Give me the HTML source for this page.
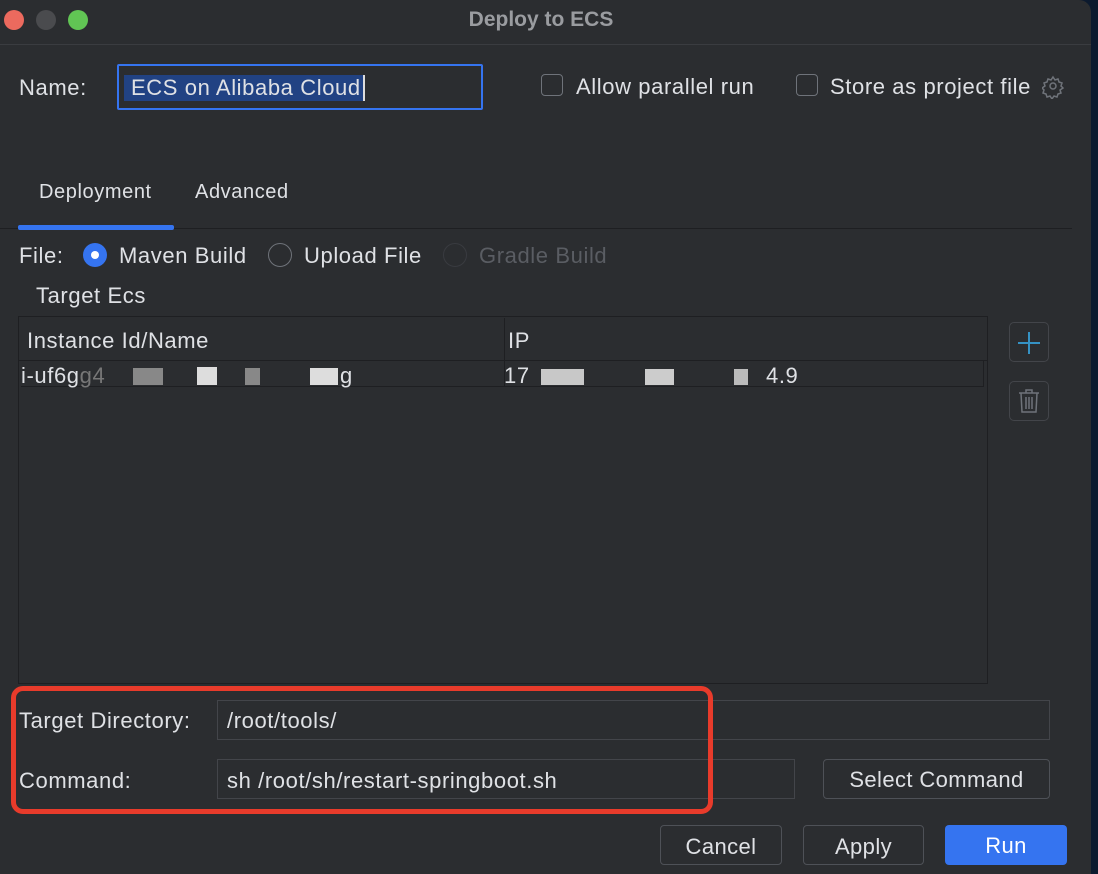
<!DOCTYPE html>
<html><head><style>
body{margin:0;width:1098px;height:874px;background:#0c1a2e;overflow:hidden;font-family:"Liberation Sans",sans-serif;color:#dfe1e5;}
.win{position:absolute;left:0;top:0;width:1091px;height:874px;background:#2b2d30;border-top-right-radius:12px;}
.a{position:absolute;white-space:nowrap;}
.t{font-size:22px;letter-spacing:0.6px;}
.dot{position:absolute;top:10px;width:20px;height:20px;border-radius:50%;}
.cb{position:absolute;width:20px;height:20px;border:1.5px solid #6f737a;border-radius:4px;}
.rad{position:absolute;width:24px;height:24px;border-radius:50%;border:1.5px solid #6f737a;box-sizing:border-box;}
.fld{position:absolute;border:1.5px solid #43454a;box-sizing:border-box;}
.btn{position:absolute;border:1.5px solid #4e5157;border-radius:4px;box-sizing:border-box;text-align:center;font-size:22px;letter-spacing:0.4px;}
.blur{position:absolute;background:#d8d8d8;}
</style></head><body>
<div class="win">
<div class="dot" style="left:4px;background:#ec6a5e"></div>
<div class="dot" style="left:36px;background:#4a4b4e"></div>
<div class="dot" style="left:68px;background:#61c554"></div>
<div class="a" style="left:0;width:1082px;text-align:center;top:8px;font-size:21px;font-weight:bold;color:#9a9ca0">Deploy to ECS</div>
<div class="a" style="left:0;top:44px;width:1091px;height:1px;background:#3a3c40"></div>

<div class="a t" style="left:19px;top:75px">Name:</div>
<div class="a" style="left:117px;top:64px;width:366px;height:46px;border:2.5px solid #3574f0;box-sizing:border-box;border-radius:2px"></div>
<div class="a t" style="left:124px;top:75px;background:#214283;padding:0 2px 0 7px;border-right:2px solid #ddd">ECS on Alibaba Cloud</div>

<div class="cb" style="left:541px;top:74px"></div>
<div class="a t" style="left:576px;top:74px">Allow parallel run</div>
<div class="cb" style="left:796px;top:74px"></div>
<div class="a t" style="left:830px;top:74px">Store as project file</div>
<svg class="a" style="left:1042px;top:75px" width="24" height="24" viewBox="0 0 24 24" fill="none" stroke="#6f737a" stroke-width="1.5"><circle cx="11" cy="11" r="3"/><path d="M11 2l2 3 3-1 1 3 3 1-1 3 2 2-3 2 1 3-3 1-1 3-3-1-2 3-2-3-3 1-1-3-3-1 1-3-2-2 3-2-1-3 3-1 1-3 3 1z"/></svg>

<div class="a" style="left:0;top:228px;width:1072px;height:1px;background:#1e1f22"></div>
<div class="a" style="left:39px;top:181px;font-size:20px;letter-spacing:0.6px">Deployment</div>
<div class="a" style="left:195px;top:181px;font-size:20px;letter-spacing:0.6px">Advanced</div>
<div class="a" style="left:18px;top:225px;width:156px;height:5px;background:#3574f0;border-radius:2px"></div>

<div class="a t" style="left:19px;top:243px">File:</div>
<div class="rad" style="left:83px;top:243px;background:#3574f0;border:none"></div>
<div class="a" style="left:91px;top:251px;width:8px;height:8px;border-radius:50%;background:#fff"></div>
<div class="a t" style="left:119px;top:243px">Maven Build</div>
<div class="rad" style="left:268px;top:243px"></div>
<div class="a t" style="left:304px;top:243px">Upload File</div>
<div class="rad" style="left:443px;top:243px;border-color:#393b40"></div>
<div class="a t" style="left:479px;top:243px;color:#5a5d63">Gradle Build</div>

<div class="a t" style="left:36px;top:283px">Target Ecs</div>

<div class="a" style="left:18px;top:316px;width:970px;height:368px;border:1.5px solid #1e1f22;box-sizing:border-box;background:#2b2d30"></div>
<div class="a" style="left:19px;top:360px;width:968px;height:1px;background:#1e1f22"></div>
<div class="a" style="left:504px;top:318px;width:1px;height:68px;background:#1e1f22"></div>
<div class="a" style="left:21px;top:386px;width:962px;height:1px;background:#1e1f22"></div>
<div class="a" style="left:983px;top:360px;width:1px;height:27px;background:#1e1f22"></div>
<div class="a t" style="left:27px;top:328px">Instance Id/Name</div>
<div class="a t" style="left:508px;top:328px">IP</div>
<div class="a t" style="left:21px;top:363px">i-uf6g<span style="color:#777">g4</span></div>
<div class="blur" style="left:133px;top:368px;width:30px;height:17px;background:#888"></div>
<div class="blur" style="left:197px;top:367px;width:20px;height:18px;background:#ddd"></div>
<div class="blur" style="left:245px;top:368px;width:15px;height:17px;background:#888"></div>
<div class="a t" style="left:340px;top:363px">g</div>
<div class="blur" style="left:310px;top:368px;width:28px;height:17px;background:#ddd"></div>
<div class="a t" style="left:504px;top:363px">17</div>
<div class="blur" style="left:541px;top:369px;width:43px;height:16px;background:#c8c8c8"></div>
<div class="blur" style="left:645px;top:369px;width:29px;height:16px;background:#ccc"></div>
<div class="blur" style="left:734px;top:369px;width:14px;height:16px;background:#bbb"></div>
<div class="a t" style="left:766px;top:363px">4.9</div>

<div class="a" style="left:1009px;top:322px;width:40px;height:40px;border:1.5px solid #43454a;border-radius:5px;box-sizing:border-box"></div>
<div class="a" style="left:1018px;top:342px;width:22px;height:2px;background:#3592c4"></div>
<div class="a" style="left:1028px;top:332px;width:2px;height:22px;background:#3592c4"></div>
<div class="a" style="left:1009px;top:381px;width:40px;height:40px;border:1.5px solid #43454a;border-radius:5px;box-sizing:border-box"></div>
<svg class="a" style="left:1017px;top:388px" width="24" height="26" viewBox="0 0 24 26" fill="none" stroke="#6f737a" stroke-width="1.5"><path d="M2 5h20M9 5V2h6v3M4 5l1 19h14l1-19M9 9v12M12 9v12M15 9v12"/></svg>

<div class="a t" style="left:19px;top:708px">Target Directory:</div>
<div class="fld" style="left:217px;top:700px;width:833px;height:40px"></div>
<div class="a t" style="left:227px;top:708px">/root/tools/</div>
<div class="a t" style="left:19px;top:768px">Command:</div>
<div class="fld" style="left:217px;top:759px;width:578px;height:40px"></div>
<div class="a t" style="left:227px;top:768px">sh /root/sh/restart-springboot.sh</div>
<div class="btn" style="left:823px;top:759px;width:227px;height:40px;line-height:40px">Select Command</div>

<div class="a" style="left:11px;top:686px;width:702px;height:128px;border:5px solid #e83b2b;border-radius:12px;box-sizing:border-box"></div>

<div class="btn" style="left:660px;top:825px;width:122px;height:40px;line-height:41px">Cancel</div>
<div class="btn" style="left:803px;top:825px;width:121px;height:40px;line-height:41px">Apply</div>
<div class="btn" style="left:945px;top:825px;width:122px;height:40px;line-height:42px;background:#3574f0;border:none;color:#fff">Run</div>
</div>
</body></html>
